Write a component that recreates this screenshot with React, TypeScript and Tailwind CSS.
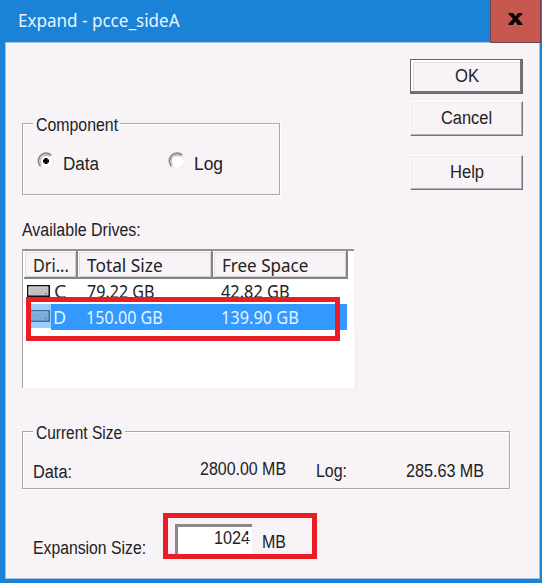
import { useLayoutEffect, useRef, useState } from 'react';

type FitProps = { text: string; box: string; font?: string };

const DIALOG = "font-['Liberation_Sans',sans-serif] text-[18px] leading-[20px] text-[#222]";
const LIST = "font-['Noto_Sans',sans-serif] text-[18px] leading-[24px]";

// Condenses or widens one line of text so that it fills its box.
function Fit({ text, box, font = DIALOG }: FitProps) {
  const outer = useRef<HTMLSpanElement>(null);
  const inner = useRef<HTMLSpanElement>(null);
  const [scale, setScale] = useState(1);
  useLayoutEffect(() => {
    const measure = () => {
      if (outer.current && inner.current) {
        setScale(outer.current.offsetWidth / inner.current.offsetWidth);
      }
    };
    measure();
    document.fonts.ready.then(measure);
  }, [text]);
  return (
    <span ref={outer} className={`block shrink-0 whitespace-nowrap ${box} ${font}`}>
      <span ref={inner} className="inline-block origin-left" style={{ transform: `scaleX(${scale})` }}>
        {text}
      </span>
    </span>
  );
}

function PushButton({ label, box, primary = false }: { label: string; box: string; primary?: boolean }) {
  return (
    <button
      className={`flex h-[35px] w-[113px] justify-center border pt-[6px] ${
        primary
          ? 'border-[#68666a] shadow-[inset_-2px_-2px_0_#737174,inset_2px_2px_0_#fff,inset_3px_3px_0_#e3e1e5]'
          : 'border-t-white border-r-[#77757a] border-b-[#77757a] border-l-white shadow-[inset_-1px_-1px_0_#b5b3b7,inset_1px_1px_0_#ebe9ed]'
      }`}
    >
      <Fit text={label} box={box} />
    </button>
  );
}

function Radio({ on = false }: { on?: boolean }) {
  return (
    <svg width="18" height="18" viewBox="0 0 18 18" className="shrink-0">
      <circle cx="9" cy="9" r="7.5" fill="#fff" />
      <path d="M3.7 14.3A7.5 7.5 0 0 1 14.3 3.4" fill="none" stroke="#8b898c" strokeWidth="1.8" />
      <path d="M4.7 12.6A5.7 5.7 0 0 1 13 4.8" fill="none" stroke="#aaa8ab" strokeWidth="1" />
      <path d="M14.3 3.7A7.5 7.5 0 0 1 3.7 14.3" fill="none" stroke="#e9e6ea" strokeWidth="1" />
      {on && <path d="M7.5 6h3v1.5H12v3h-1.5V12h-3v-1.5H6v-3h1.5z" fill="#000" />}
    </svg>
  );
}

function DriveIcon({ selected = false }: { selected?: boolean }) {
  return (
    <svg width="23" height="12" viewBox="0 0 23 12" className="shrink-0">
      <rect x="0.75" y="0.75" width="21.5" height="10.5" fill={selected ? '#7eacda' : '#c2c0c3'} stroke={selected ? '#41729f' : '#111'} strokeWidth="1.5" />
      <path d="M2 10V2H21" fill="none" stroke={selected ? '#8cb9e5' : '#d6d4d7'} />
      <path d="M18 8.5h1.5" stroke={selected ? '#3f7095' : '#777'} />
    </svg>
  );
}

function HeaderCell({ text, cell, box }: { text: string; cell: string; box: string }) {
  return (
    <div className={`h-[28px] border-r-2 border-b-2 border-[#858387] bg-[#f7f3f7] pt-[2px] shadow-[inset_1px_1px_0_#fff,inset_2px_2px_0_#e1dfe2,inset_-1px_-1px_0_#d0ced1] ${cell}`}>
      <Fit text={text} box={box} font={`${LIST} text-[#222]`} />
    </div>
  );
}

export default function App() {
  return (
    <div className="flex h-[583px] w-[542px] flex-col bg-[#1a82d7]">
      <header className="flex h-[42px] shrink-0 justify-between">
        <div className="pt-[8px] pl-[18px]">
          <Fit text="Expand - pcce_sideA" box="w-[162px]" font={`${LIST} text-[#e8f4ff]`} />
        </div>
        <button className="relative z-10 mr-px flex h-[43px] w-[51px] items-start justify-center border border-t-0 border-[#70464e] bg-[#c75850] pt-[12px]">
          <svg width="15" height="14" viewBox="0 0 15 14">
            <path d="M0.5 1h4.8l2.3 3.2L10 1h4.3v1.2L9.8 6.6l4.7 5.1V13H9.7L7.3 9.5 4.9 13H.4v-1.3L5 6.8.5 2.2z" fill="#080808" />
          </svg>
        </button>
      </header>

      <main className="mr-[2px] ml-[5px] h-[537px] border border-[#9cc1e3] bg-[#f7f3f7]">
        <div className="flex h-[174px] justify-between px-[16px]">
          <div className="mt-[80px] h-[72px] w-[258px] border border-[#aaa8ab] shadow-[1px_1px_0_#fff,inset_1px_1px_0_#fff]">
            <div className="-mt-[9px] ml-[10px] flex h-[20px] w-[87px] bg-[#f7f3f7] pl-[3px]">
              <Fit text="Component" box="w-[82px]" />
            </div>
            <div className="flex pl-[14px]">
              <div className="pt-[17px]"><Radio on /></div>
              <div className="mt-[19px] ml-[8px]"><Fit text="Data" box="w-[36px]" /></div>
              <div className="ml-[69px] pt-[17px]"><Radio /></div>
              <div className="mt-[19px] ml-[8px]"><Fit text="Log" box="w-[29px]" /></div>
            </div>
          </div>
          <div className="flex flex-col pt-[16px]">
            <PushButton label="OK" box="w-[24px]" primary />
            <div className="mt-[7px]"><PushButton label="Cancel" box="w-[51px]" /></div>
            <div className="mt-[19px]"><PushButton label="Help" box="w-[34px]" /></div>
          </div>
        </div>

        <section className="pl-[16px]">
          <div className="pt-[3px]"><Fit text="Available Drives:" box="w-[119px]" /></div>
          <div className="relative mt-[9px] h-[139px] w-[332px] border-t-2 border-l border-t-[#929094] border-l-[#a7a5a8] bg-white">
            <div className="flex pl-px">
              <HeaderCell text="Dri..." cell="w-[54px] pl-[9px]" box="w-[36px]" />
              <HeaderCell text="Total Size" cell="w-[135px] pl-[9px]" box="w-[76px]" />
              <HeaderCell text="Free Space" cell="w-[135px] pl-[9px]" box="w-[86px]" />
            </div>
            <div className="flex h-[25px] pl-[4px]">
              <div className="pt-[6px]"><DriveIcon /></div>
              <div className="ml-[4px] flex">
                <Fit text="C" box="w-[12px]" font={`${LIST} text-[#333]`} />
                <div className="ml-[21px]"><Fit text="79.22 GB" box="w-[68px]" font={`${LIST} text-[#222]`} /></div>
                <div className="ml-[66px]"><Fit text="42.82 GB" box="w-[69px]" font={`${LIST} text-[#222]`} /></div>
              </div>
            </div>
            <div className="flex h-[26px] pl-[4px]">
              <div className="h-[24px] w-[24px] bg-[#9bceff] pt-[6px]"><DriveIcon selected /></div>
              <div className="flex h-[26px] w-[296px] bg-[#3399ff] pt-px pl-[2px]">
                <Fit text="D" box="w-[13px]" font={`${LIST} text-[#e5f3ff]`} />
                <div className="ml-[20px]"><Fit text="150.00 GB" box="w-[77px]" font={`${LIST} text-[#e5f3ff]`} /></div>
                <div className="ml-[58px]"><Fit text="139.90 GB" box="w-[78px]" font={`${LIST} text-[#e5f3ff]`} /></div>
              </div>
            </div>
            <div className="absolute top-[46px] left-[3px] h-[44px] w-[314px] border-[5px] border-[#ed1c24]" />
            <div className="absolute top-[83px] left-[333px] h-[57px] w-[2px] bg-[#f1eff1]" />
          </div>
        </section>

        <section className="mt-[43px] ml-[16px]">
          <div className="h-[58px] w-[488px] border border-[#aaa8ab] shadow-[1px_1px_0_#fff,inset_1px_1px_0_#fff]">
            <div className="-mt-[9px] ml-[10px] flex h-[20px] w-[92px] bg-[#f7f3f7] pl-[3px]">
              <Fit text="Current Size" box="w-[86px]" />
            </div>
            <div className="flex items-start pl-[10px]">
              <div className="mt-[19px]"><Fit text="Data:" box="w-[39px]" /></div>
              <div className="mt-[16px] ml-[128px]"><Fit text="2800.00 MB" box="w-[86px]" /></div>
              <div className="mt-[18px] ml-[30px]"><Fit text="Log:" box="w-[31px]" /></div>
              <div className="mt-[18px] ml-[59px]"><Fit text="285.63 MB" box="w-[78px]" /></div>
            </div>
          </div>
        </section>

        <section className="mt-[24px] flex items-start pl-[27px]">
          <div className="mt-[25px]"><Fit text="Expansion Size:" box="w-[113px]" /></div>
          <div className="ml-[17px] flex h-[46px] w-[154px] items-start border-[5px] border-[#ed1c24] pl-[7px]">
            <div className="relative mt-[6px] flex h-[30px] w-[77px] border-t-[3px] border-l-[3px] border-[#8b898c] bg-white pt-px pl-[36px]">
              <Fit text="1024" box="w-[36px]" />
              <span className="absolute top-[8px] right-[2px] h-[2px] w-[4px] bg-white" />
              <span className="absolute top-[14px] right-[2px] h-px w-[4px] bg-white" />
            </div>
            <div className="mt-[14px] ml-[10px]"><Fit text="MB" box="w-[24px]" /></div>
          </div>
        </section>
      </main>
    </div>
  );
}
